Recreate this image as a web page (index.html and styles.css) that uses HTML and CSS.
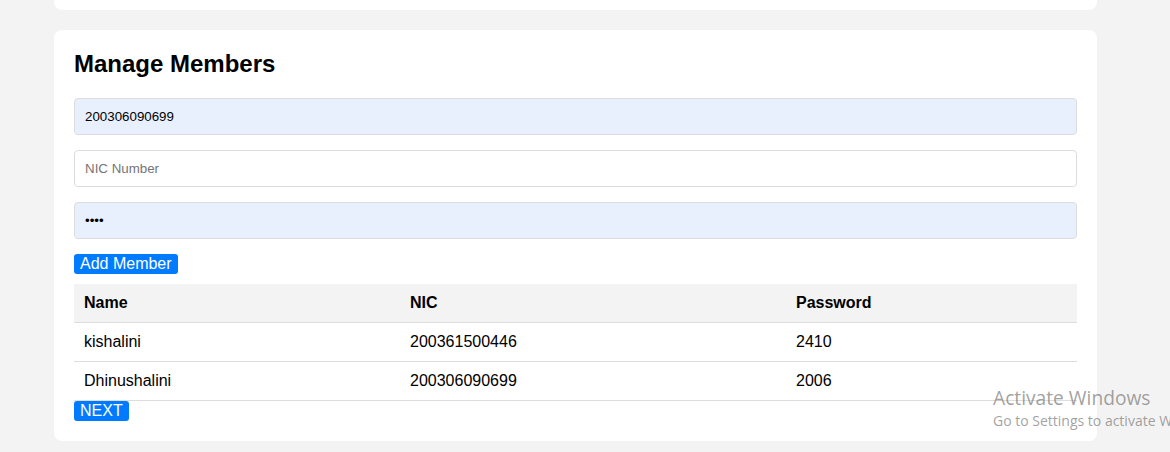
FILE: index.html
```html
<!DOCTYPE html>
<html>
<head>
<meta charset="utf-8">
<link rel="stylesheet" href="styles.css">
</head>
<body>
<div class="page">
  <div class="card card-top"></div>
  <div class="card">
    <h2 class="title">Manage Members</h2>
    <input class="field filled" type="text" value="200306090699">
    <input class="field" type="text" placeholder="NIC Number">
    <input class="field filled" type="password" value="2006">
    <button class="btn btn-add">Add Member</button>
    <table class="members">
      <colgroup>
        <col class="c1"><col class="c2"><col class="c3">
      </colgroup>
      <thead>
        <tr><th>Name</th><th>NIC</th><th>Password</th></tr>
      </thead>
      <tbody>
        <tr><td>kishalini</td><td>200361500446</td><td>2410</td></tr>
        <tr><td>Dhinushalini</td><td>200306090699</td><td>2006</td></tr>
      </tbody>
    </table>
    <button class="btn">NEXT</button>
  </div>
</div>
<div class="watermark">
  <div class="wm-title">Activate Windows</div>
  <div class="wm-sub">Go to Settings to activate Windows.</div>
</div>
</body>
</html>
```

FILE: styles.css
```css
html, body {
  margin: 0;
  padding: 0;
  background: #f3f3f3;
  font-family: "Liberation Sans", Arial, sans-serif;
  overflow: hidden;
  height: 452px;
}
.page {
  margin-left: 54px;
  width: 1043px;
  display: flex;
  flex-direction: column;
  gap: 20px;
}
.card {
  background: #fff;
  border-radius: 8px;
  padding: 20px;
  display: flex;
  flex-direction: column;
  align-items: flex-start;
}
.card-top {
  height: 10px;
  padding: 0;
  border-radius: 0 0 8px 8px;
}
.title {
  margin: 0 0 20px 0;
  font-size: 24px;
  font-weight: bold;
  color: #000;
}
.field {
  box-sizing: border-box;
  width: 100%;
  height: 37px;
  margin: 0 0 15px 0;
  padding: 10px;
  border: 1px solid #dcdcdc;
  border-radius: 4px;
  font-family: "Liberation Sans", Arial, sans-serif;
  font-size: 13.333px;
  color: #000;
  background: #fff;
  outline: none;
}
.field::placeholder {
  color: #757575;
}
.field.filled {
  background: #e8f0fe;
}
.btn {
  background: #007bff;
  color: #fff;
  border: none;
  border-radius: 3px;
  padding: 1px 6px;
  font-family: "Liberation Sans", Arial, sans-serif;
  font-size: 16px;
  line-height: 18px;
}
.btn-add {
  margin-bottom: 10px;
}
.members {
  width: 100%;
  border-collapse: collapse;
  table-layout: fixed;
  font-size: 16px;
}
.c1 { width: 326px; }
.c2 { width: 386px; }
.c3 { width: 291px; }
.members th,
.members td {
  text-align: left;
  padding: 10px;
  line-height: 18px;
  border-bottom: 1px solid #dddddd;
  color: #000;
}
.members th {
  background: #f3f3f3;
  font-weight: bold;
}
.watermark {
  position: absolute;
  left: 993px;
  top: 386px;
  white-space: nowrap;
  font-family: "Open Sans", "Noto Sans", sans-serif;
  color: rgba(120, 120, 120, 0.7);
}
.wm-title {
  font-size: 19.2px;
  line-height: 24px;
}
.wm-sub {
  font-size: 14px;
  line-height: 22px;
}
```
